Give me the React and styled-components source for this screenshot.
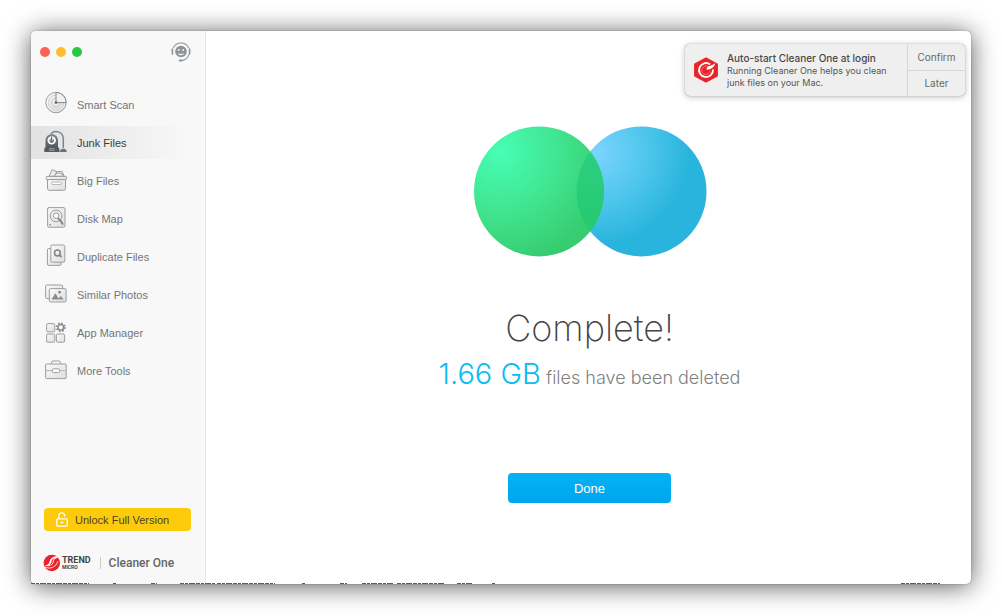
import React, { useState } from "react";
import styled, { createGlobalStyle, css } from "styled-components";

const GlobalStyle = createGlobalStyle`
  * {
    box-sizing: border-box;
  }
  body {
    margin: 0;
    background: #fff;
    font-family: "Liberation Sans", Arial, sans-serif;
  }
  button {
    font-family: inherit;
    cursor: pointer;
  }
`;

const Desktop = styled.div`
  display: flex;
  min-height: 100vh;
  padding: 31px 31px 32px;
`;

const AppWindow = styled.div`
  position: relative;
  display: flex;
  flex: 1;
  border-radius: 5px;
  background: #fff;
  box-shadow: 0 0 2px rgba(0, 0, 0, 0.3), 0 2px 26px rgba(0, 0, 0, 0.66);
`;

const Sidebar = styled.aside`
  display: flex;
  flex-direction: column;
  width: 175px;
  border-right: 1px solid #e6e6e6;
  border-radius: 5px 0 0 5px;
  background: #f8f8f8;
`;

const TitleBar = styled.header`
  display: flex;
  align-items: center;
  justify-content: space-between;
  height: 41px;
  padding: 0 14px 0 9px;
`;

const Lights = styled.div`
  display: flex;
  gap: 6px;
`;

const Light = styled.button`
  width: 10px;
  height: 10px;
  padding: 0;
  border: none;
  border-radius: 50%;
  background: ${({ $color }) => $color};
`;

const SupportButton = styled.button`
  display: flex;
  padding: 0;
  border: none;
  background: none;
`;

const Nav = styled.nav`
  display: flex;
  flex: 1;
  flex-direction: column;
  gap: 5px;
  padding-top: 16px;
`;

const NavItem = styled.a`
  display: flex;
  align-items: center;
  gap: 9px;
  height: 33px;
  padding-left: 13px;
  color: #757575;
  font-size: 11px;
  text-decoration: none;

  ${({ $active }) =>
    $active &&
    css`
      color: #3c3c3c;
      background: linear-gradient(90deg, #e2e2e2, #f8f8f8 92%);
    `}
`;

const UnlockButton = styled.button`
  display: flex;
  align-items: center;
  gap: 7px;
  height: 23px;
  margin: 0 14px 0 13px;
  padding: 0 0 0 12px;
  border: none;
  border-radius: 4px;
  background: #fecb0c;
  color: #4a4324;
  font-size: 11px;
`;

const Brand = styled.footer`
  display: flex;
  align-items: center;
  height: 22px;
  margin: 21px 0 10px;
  padding-left: 12px;
`;

const BrandMark = styled.div`
  display: flex;
  flex-direction: column;
  margin-left: 1px;
  color: #444;
  font-family: Roboto, "Liberation Sans", sans-serif;
  font-size: 9px;
  font-weight: 700;
  line-height: 9px;

  small {
    font-size: 5px;
    line-height: 5px;
  }
`;

const BrandName = styled.div`
  margin-left: 9px;
  padding-left: 8px;
  border-left: 1px solid #ccc;
  color: #666;
  font-family: Roboto, "Liberation Sans", sans-serif;
  font-size: 12px;
  font-weight: 500;
  line-height: 12px;
`;

const Main = styled.main`
  display: flex;
  flex: 1;
  flex-direction: column;
  align-items: center;
  padding: 94px 0 0 2px;
`;

const Title = styled.h1`
  margin: 48px 0 0;
  color: #444;
  font-family: Inter, "Liberation Sans", sans-serif;
  font-size: 36px;
  font-weight: 200;
  line-height: 46px;
`;

const Summary = styled.p`
  margin: 4px 0 0;
  color: #808080;
  font-family: Inter, "Liberation Sans", sans-serif;
  font-size: 18px;
  font-weight: 300;
  line-height: 38px;

  strong {
    color: #0abcf5;
    font-size: 29px;
    font-weight: 300;
  }
`;

const DoneButton = styled.button`
  width: 163px;
  height: 30px;
  margin-top: 76px;
  border: none;
  border-radius: 4px;
  background: linear-gradient(#04b2f3, #00a6ee);
  color: #fff;
  font-size: 13px;
`;

const Notice = styled.section`
  position: absolute;
  top: 13px;
  right: 6px;
  display: flex;
  width: 280px;
  height: 52px;
  border-radius: 5px;
  background: #efefef;
  box-shadow: 0 0 1px rgba(0, 0, 0, 0.4), 0 1px 6px rgba(0, 0, 0, 0.26);
  font-family: Inter, "Liberation Sans", sans-serif;
`;

const NoticeBody = styled.div`
  display: flex;
  flex: 1;
  align-items: center;
  gap: 8px;
  padding-left: 8px;
`;

const NoticeTitle = styled.h2`
  margin: 0;
  color: #484848;
  font-size: 10px;
  font-weight: 500;
  line-height: 13px;
`;

const NoticeText = styled.p`
  margin: 0;
  color: #555;
  font-size: 9px;
  line-height: 12px;
`;

const NoticeActions = styled.div`
  display: flex;
  flex-direction: column;
  width: 58px;
  border-left: 1px solid #d6d6d6;
`;

const NoticeButton = styled.button`
  flex: 1;
  padding: 0;
  border: none;
  background: none;
  color: #686868;
  font-size: 10px;

  & + & {
    border-top: 1px solid #d6d6d6;
  }
`;

const WindowEdge = styled.svg`
  position: absolute;
  bottom: 0;
  left: 0;
  width: 100%;
  height: 1px;
`;

const Icon = ({ children }) => (
  <svg
    width="24"
    height="25"
    viewBox="0 0 24 25"
    fill="url(#plate)"
    stroke="#9b9da0"
    strokeWidth="1"
    strokeLinejoin="round"
    aria-hidden="true"
  >
    {children}
  </svg>
);

const ScanIcon = () => (
  <Icon>
    <circle cx="12" cy="10.6" r="10.2" />
    <circle cx="12" cy="10.6" r="7.4" fill="none" stroke="#cfcfd1" />
    <circle cx="12" cy="10.6" r="4.4" fill="none" stroke="#c2c3c5" />
    <path d="M12 10.6V.4A10.2 10.2 0 0 1 22.2 10.6Z" fill="#f1f1f1" stroke="#85888c" />
    <circle cx="12" cy="10.6" r="1.5" fill="#777b80" stroke="none" />
  </Icon>
);

const JunkIcon = () => (
  <Icon>
    <path
      d="M7 4.5C7.5 1.5 12 .9 15 2.1C18.5 3.4 19.3 6 19.3 9V18"
      fill="none"
      stroke="#7d858c"
      strokeWidth="1.5"
    />
    <path d="M15.6 22c.3-2 2-3.2 3.2-3.2h1.1c1.3 0 2.6 1.2 2.9 3.2Z" fill="#69727a" stroke="none" />
    <path d="M1.5 18V11C1.5 6.5 4 4.2 7.7 4.2S14 6.5 14 11V18Z" fill="url(#steel)" stroke="none" />
    <path d="M.3 22v-3.2q0-1.3 1.3-1.3H14q1.4 0 1.4 1.3V22Z" fill="#525c65" stroke="none" />
    <circle cx="7.7" cy="10.4" r="4.2" fill="#fff" stroke="none" />
    <circle cx="7.7" cy="10.6" r="2.3" fill="#66717a" stroke="none" />
    <path d="M7.7 6.4v4.2" stroke="#fff" strokeWidth="2.2" />
    <path d="M7.7 6.4v4.2" stroke="#46515a" strokeWidth="1" />
    <path d="M5 18.7h5.5M5 20.3h5.5" stroke="#aab0b5" strokeWidth=".8" />
  </Icon>
);

const BoxIcon = () => (
  <Icon>
    <path d="M5 8.4L8.1 1.6L12.6 3.6L10.8 8.4Z" />
    <path d="M10.5 8.4A4.6 4.6 0 0 1 19.5 8.4Z" />
    <path d="M12 3.8L18 3.3L20.3 8.4" fill="none" />
    <path d="M3.5 11.5h18v9q0 1.8-1.8 1.8H5.3q-1.8 0-1.8-1.8Z" />
    <rect x="2.2" y="8.4" width="20.4" height="3.2" rx=".8" />
    <rect x="7.6" y="14" width="9.8" height="2.6" rx=".6" fill="#fff" stroke="#b5b6b8" />
  </Icon>
);

const DiskIcon = () => (
  <Icon>
    <rect x="3.6" y="1.6" width="17.4" height="19.6" rx="1.4" />
    <circle cx="12" cy="9.9" r="5.9" fill="#e9e9ea" />
    <circle cx="12.2" cy="9.7" r="2.7" fill="#fff" />
    <path d="M13.8 12.4L16.2 14.2L19 18.4" fill="none" stroke="#7b7f84" strokeWidth="1.8" />
    <circle cx="6.2" cy="18.6" r=".9" fill="#85888c" stroke="none" />
  </Icon>
);

const DuplicateIcon = () => (
  <Icon>
    <rect x="3.4" y="4.6" width="13.8" height="16.8" rx="1.4" />
    <rect x="6.8" y="1" width="14" height="17.2" rx="1.4" />
    <circle cx="13.4" cy="9" r="2.9" fill="none" stroke="#7f8287" strokeWidth="1.5" />
    <path d="M15.5 11.2L17.5 13.2" stroke="#7f8287" strokeWidth="1.8" />
  </Icon>
);

const PhotosIcon = () => (
  <Icon>
    <rect x="1.6" y="3" width="17" height="13.6" rx="1.2" />
    <rect x="5.3" y="6.6" width="16.8" height="13.4" rx="1.2" />
    <path d="M7.5 17.6L11.4 11.2L14.6 16.4L16.8 14L19.8 17.6Z" fill="#888b8f" stroke="none" />
    <circle cx="15.6" cy="10.2" r="1.4" fill="#888b8f" stroke="none" />
  </Icon>
);

const AppsIcon = () => (
  <Icon>
    <rect x="2.6" y="3.6" width="8.2" height="8.2" rx="1.2" />
    <rect x="2.6" y="14" width="8.2" height="8.2" rx="1.2" />
    <rect x="12.4" y="14" width="8.2" height="8.2" rx="1.2" />
    <circle cx="16.8" cy="7.3" r="4" fill="none" stroke="#85888c" strokeWidth="1.8" strokeDasharray="1.57 1.57" />
    <circle cx="16.8" cy="7.3" r="2.8" fill="#f8f8f8" stroke="#85888c" strokeWidth="1.4" />
  </Icon>
);

const ToolsIcon = () => (
  <Icon>
    <path d="M7.6 6V4.2Q7.6 3 8.8 3H15.2Q16.4 3 16.4 4.2V6" fill="none" />
    <rect x="1.6" y="6" width="20.6" height="14.6" rx="1" />
    <path d="M1.6 12.6H22.2" stroke="#b3b4b6" />
    <rect x="8.3" y="10.8" width="7.4" height="3.8" rx="1.2" fill="#fff" />
  </Icon>
);

const SupportIcon = () => (
  <svg width="20" height="20" viewBox="0 0 20 20" fill="none" stroke="#8f9398" aria-hidden="true">
    <path d="M2.2 6A8.6 8.6 0 0 1 17.8 6" strokeWidth="1.1" />
    <path d="M17.8 12.6C16.6 16.2 13.8 18.2 10.6 18.4" strokeWidth="1.1" />
    <path d="M1.4 7v5M18.6 7v5" strokeWidth="1.6" strokeLinecap="round" />
    <path d="M8.6 18.5h2.2" strokeWidth="1.8" strokeLinecap="round" />
    <circle cx="10" cy="9.5" r="5.8" fill="#8f9398" stroke="none" />
    <circle cx="7.8" cy="8" r=".9" fill="#f8f8f8" stroke="none" />
    <circle cx="12.2" cy="8" r=".9" fill="#f8f8f8" stroke="none" />
    <path d="M6.8 11C8.2 12.2 11.8 12.2 13.2 11C12.4 14 7.6 14 6.8 11Z" fill="#f8f8f8" stroke="none" />
  </svg>
);

const LockIcon = () => (
  <svg width="12" height="16" viewBox="0 0 12 16" fill="none" stroke="#fff" strokeWidth="1.3" aria-hidden="true">
    <rect x=".8" y="6.8" width="10.4" height="7.4" rx="1" />
    <path d="M2.8 6.8V4A2.9 2.9 0 0 1 8.6 3.6V4.4" />
    <path d="M4.6 10.5H7.4" />
  </svg>
);

const TrendLogo = () => (
  <svg width="18" height="18" viewBox="0 0 18 18" aria-hidden="true">
    <circle cx="8.8" cy="9" r="8.2" fill="#e8222a" />
    <path
      d="M13.4 2.2C9.6 2.4 7.2 4.6 6.6 7.6C6.2 9.8 5 11.2 1.6 11.8C6.4 13.2 10 11.4 10.6 8C11 5.6 12 4.4 15 3.8Z"
      fill="#fff"
    />
    <path d="M12.6 4C10 4.4 8.8 5.8 8.4 8C8 10 7 11 5 11.6C8 11.4 9.4 10 9.8 7.8C10.1 6 10.8 4.8 12.6 4Z" fill="#e8222a" />
    <path d="M1.4 13C6.6 15.4 12.8 13.8 14.8 7.4" fill="none" stroke="#fff" strokeWidth=".9" />
  </svg>
);

const CleanerIcon = () => (
  <svg width="26" height="26" viewBox="0 0 26 26" aria-hidden="true">
    <path d="M13 1L24.2 7.2V18.8L13 25L1.8 18.8V7.2Z" fill="#eb2227" stroke="#eb2227" strokeWidth="1.4" strokeLinejoin="round" />
    <path d="M17.2 7.4A7 7 0 1 0 20 12.4" fill="none" stroke="#fff" strokeWidth="1.8" />
    <path d="M15.4 9.8A4.2 4.2 0 1 0 17.2 13.2" fill="none" stroke="#f79a9c" strokeWidth=".6" />
    <path d="M13.4 12.6C13.6 10 15.6 9 18 8.6L22.6 6.2L20.6 9.8C19 11 17.4 12.6 15.2 12.4Z" fill="#fff" />
  </svg>
);

const Circles = () => (
  <svg width="234" height="132" viewBox="0 0 234 132" aria-hidden="true">
    <defs>
      <radialGradient id="green" cx=".2" cy=".2" r=".86">
        <stop offset="0" stopColor="#46feb4" />
        <stop offset=".5" stopColor="#41e692" />
        <stop offset="1" stopColor="#37cc70" />
      </radialGradient>
      <radialGradient id="blue" cx=".16" cy=".2" r=".84">
        <stop offset="0" stopColor="#7ad4ff" />
        <stop offset=".45" stopColor="#4fc6ec" />
        <stop offset=".85" stopColor="#28b4dd" />
        <stop offset="1" stopColor="#28b4dd" />
      </radialGradient>
      <linearGradient id="overlap" x1="0" y1="0" x2=".3" y2="1">
        <stop offset="0" stopColor="#2fd187" />
        <stop offset="1" stopColor="#21c769" />
      </linearGradient>
      <clipPath id="left">
        <circle cx="66" cy="66.4" r="65" />
      </clipPath>
    </defs>
    <circle cx="168.5" cy="66.4" r="65" fill="url(#blue)" />
    <circle cx="66" cy="66.4" r="65" fill="url(#green)" />
    <circle cx="168.5" cy="66.4" r="65" fill="url(#overlap)" clipPath="url(#left)" />
  </svg>
);

// shared fills of the sidebar icons
const FillDefs = styled.svg`
  position: absolute;
`;

const IconFills = () => (
  <FillDefs width="0" height="0" aria-hidden="true">
    <linearGradient id="plate" x1="0" y1="0" x2="1" y2="1">
      <stop offset="0" stopColor="#fafafa" />
      <stop offset="1" stopColor="#dedede" />
    </linearGradient>
    <linearGradient id="steel" x1="0" y1="0" x2="0" y2="1">
      <stop offset="0" stopColor="#7d868e" />
      <stop offset="1" stopColor="#4d5861" />
    </linearGradient>
  </FillDefs>
);

const items = [
  { id: "scan", text: "Smart Scan", icon: <ScanIcon /> },
  { id: "junk", text: "Junk Files", icon: <JunkIcon /> },
  { id: "big", text: "Big Files", icon: <BoxIcon /> },
  { id: "disk", text: "Disk Map", icon: <DiskIcon /> },
  { id: "duplicate", text: "Duplicate Files", icon: <DuplicateIcon /> },
  { id: "photos", text: "Similar Photos", icon: <PhotosIcon /> },
  { id: "apps", text: "App Manager", icon: <AppsIcon /> },
  { id: "tools", text: "More Tools", icon: <ToolsIcon /> },
];

const App = () => {
  const [active, setActive] = useState("junk");
  const [notice, setNotice] = useState(true);

  return (
    <Desktop>
      <GlobalStyle />
      <IconFills />
      <AppWindow>
        <Sidebar>
          <TitleBar>
            <Lights>
              <Light $color="#ff5f57" aria-label="Close" />
              <Light $color="#ffbd2e" aria-label="Minimize" />
              <Light $color="#28c940" aria-label="Zoom" />
            </Lights>
            <SupportButton aria-label="Support">
              <SupportIcon />
            </SupportButton>
          </TitleBar>
          <Nav>
            {items.map(({ id, text, icon }) => (
              <NavItem key={id} href={`#${id}`} $active={id === active} onClick={() => setActive(id)}>
                {icon}
                <span>{text}</span>
              </NavItem>
            ))}
          </Nav>
          <UnlockButton>
            <LockIcon />
            Unlock Full Version
          </UnlockButton>
          <Brand>
            <TrendLogo />
            <BrandMark>
              TREND
              <small>MICRO</small>
            </BrandMark>
            <BrandName>Cleaner One</BrandName>
          </Brand>
        </Sidebar>

        <Main>
          <Circles />
          <Title>Complete!</Title>
          <Summary>
            <strong>1.66 GB</strong> files have been deleted
          </Summary>
          <DoneButton>Done</DoneButton>
        </Main>

        {notice && (
          <Notice>
            <NoticeBody>
              <CleanerIcon />
              <div>
                <NoticeTitle>Auto-start Cleaner One at login</NoticeTitle>
                <NoticeText>
                  Running Cleaner One helps you clean
                  <br />
                  junk files on your Mac.
                </NoticeText>
              </div>
            </NoticeBody>
            <NoticeActions>
              <NoticeButton onClick={() => setNotice(false)}>Confirm</NoticeButton>
              <NoticeButton onClick={() => setNotice(false)}>Later</NoticeButton>
            </NoticeActions>
          </Notice>
        )}

        <WindowEdge aria-hidden="true">
          <path
            d="M0 .5H58M82 .5H85M120 .5H126M149 .5H184M186 .5H244M271 .5H274M309 .5H316M331 .5H362M366 .5H414M426 .5H441M461 .5H464M870 .5H909"
            stroke="#5a5a5a"
            strokeDasharray="4 1 3 1 6 1"
          />
        </WindowEdge>
      </AppWindow>
    </Desktop>
  );
};

export default App;
